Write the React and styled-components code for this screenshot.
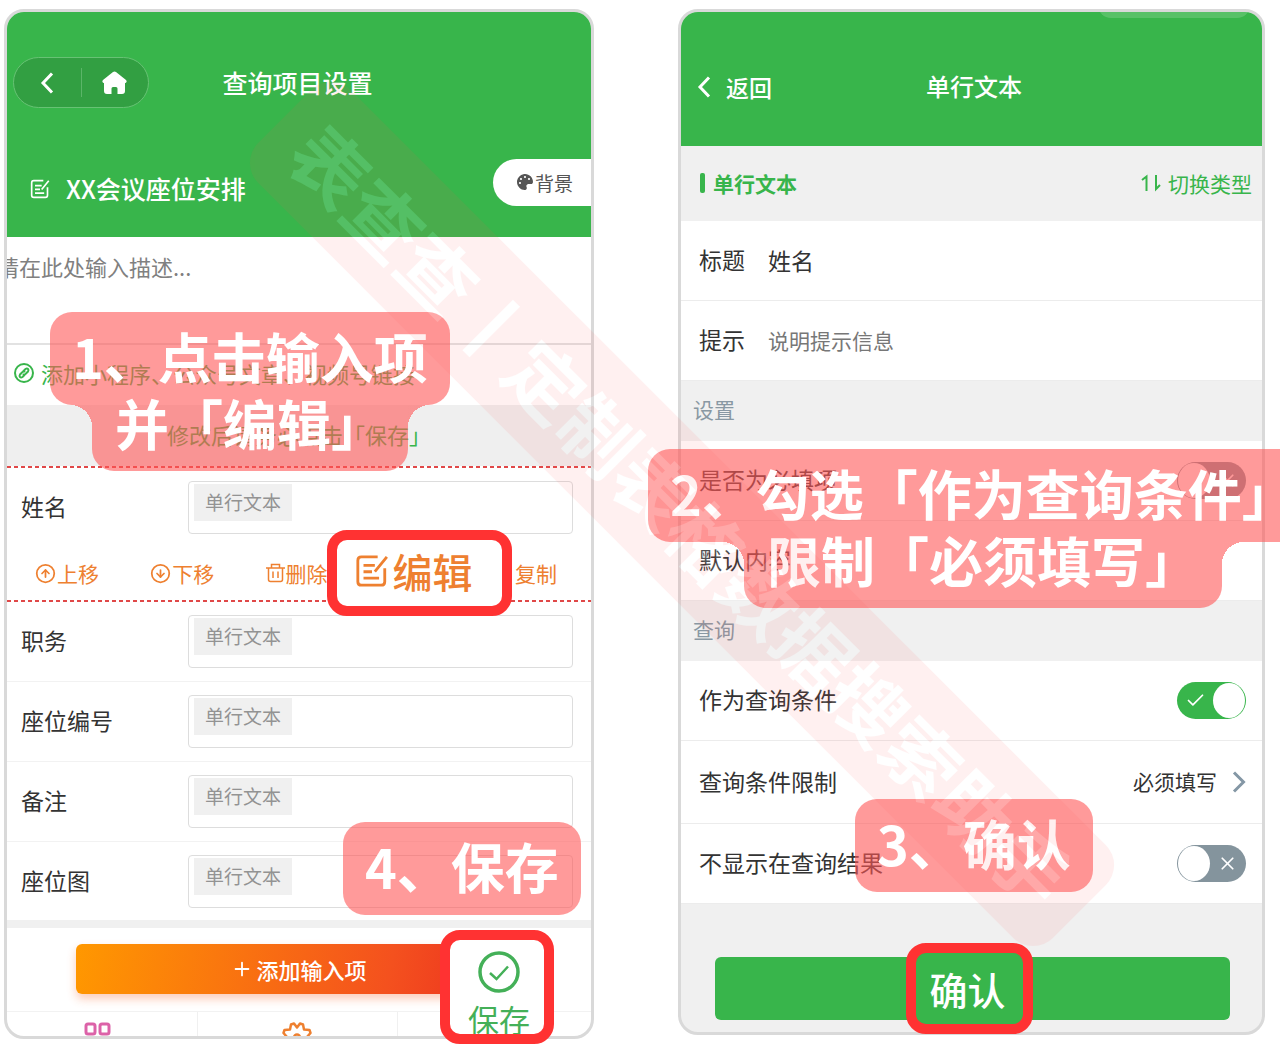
import { useState } from "react";
import { Check, X, CircleArrowUp, CircleArrowDown, Plus } from "lucide-react";
import { FaPalette } from "react-icons/fa";

//styles
import styled, { createGlobalStyle, css } from "styled-components";

const green = "#38b54b";
const orange = "#ee8030";
const coral = "rgba(255, 87, 87, 0.6)";
const red = "#ff3232";

const GlobalStyle = createGlobalStyle`
    * {
        box-sizing: border-box;
    }

    body {
        margin: 0;
        background-color: white;
        color: #333;
        font-family: "Noto Sans CJK SC", "Noto Sans", sans-serif;
    }

    button, input, textarea, select {
        font-family: inherit;
        border: none;
        background: none;
        padding: 0;
        margin: 0;
        outline: none;
    }

    svg {
        display: block;
        flex: none;
    }
`

const Board = styled.main`
    position: relative;
    display: grid;
    grid-template-columns: 590fr 587fr;
    align-items: start;
    gap: 84px;
    min-height: 100vh;
    padding: 9px 15px 3px 4px;
    overflow: hidden;
`

const Phone = styled.section`
    position: relative;
    min-width: 0;
`

const Screen = styled.div`
    position: relative;
    border: 3px solid #d9d9d9;
    border-radius: 20px;
    overflow: hidden;
    background-color: ${({ $gray }) => ($gray ? "#f0f0f0" : "white")};
`

//left phone
const ProjectHeader = styled.header`
    background-color: ${green};
    color: white;
    padding: 45px 0 31px 6px;
`

const NavBar = styled.div`
    display: grid;
    grid-template-columns: 136px 1fr 145px;
    align-items: center;
`

const Capsule = styled.div`
    display: flex;
    align-items: center;
    height: 51px;
    border: 1px solid #67c274;
    border-radius: 26px;
    background-color: #329f42;
`

const CapsuleButton = styled.button`
    flex: 1;
    display: flex;
    justify-content: center;
    align-items: center;
    height: 29px;
    color: white;

    & + & {
        border-left: 1px solid #5bb568;
    }
`

const NavTitle = styled.h1`
    margin: 0;
    padding-bottom: 2px;
    font-size: ${({ $large }) => ($large ? "25px" : "24px")};
    line-height: 36px;
    font-weight: 500;
    text-align: center;
`

const ProjectRow = styled.div`
    display: flex;
    align-items: flex-start;
    padding: 51px 0 0 17px;

    & > svg {
        margin-top: 20px;
    }
`

const ProjectName = styled.h2`
    flex: 1;
    margin: 11px 0 0 16px;
    font-size: 25px;
    line-height: 36px;
    font-weight: 500;
`

const BackgroundButton = styled.button`
    display: flex;
    align-items: center;
    gap: 2px;
    width: 98px;
    height: 47px;
    padding: 0 0 1px 24px;
    border-radius: 24px 0 0 24px;
    background-color: white;
    color: #555;
    font-size: 19px;
`

const Description = styled.textarea`
    display: block;
    width: 100%;
    height: 106px;
    padding: 13px 0;
    resize: none;
    text-indent: -10px;
    font-size: 22px;
    line-height: 33px;

    &::placeholder {
        color: #808080;
    }
`

const LinkRow = styled.a`
    display: flex;
    align-items: center;
    gap: 7px;
    height: 62px;
    padding: 0 0 5px 7px;
    border-top: 2px solid #e2e2e2;
    color: ${green};
    font-size: 22px;
    text-decoration: none;
    white-space: nowrap;
`

const SaveHint = styled.p`
    margin: 0;
    height: 61px;
    background-color: #efefef;
    color: ${green};
    font-size: 22px;
    line-height: 58px;
    text-align: center;
`

const dashes = "repeating-linear-gradient(90deg, #e04848 0 4px, transparent 4px 7px)";

const ActiveField = styled.div`
    padding: 2px 0;
    background: ${dashes} top / 100% 2px no-repeat, ${dashes} bottom / 100% 2px no-repeat;
`

const FieldRow = styled.div`
    display: grid;
    grid-template-columns: 167px 1fr;
    align-items: center;
    padding: 13px 18px 13px 14px;
    border-bottom: 1px solid #f2f2f2;

    &:last-child {
        padding-bottom: 12px;
        border-bottom: none;
    }
`

const FieldLabel = styled.label`
    padding-bottom: 4px;
    font-size: 23px;
    line-height: 34px;
`

const FieldBox = styled.div`
    height: 53px;
    padding: 2px 5px;
    border: 1px solid #ddd;
    border-radius: 4px;
`

const FieldInput = styled.input`
    display: block;
    width: 98px;
    height: 37px;
    padding-bottom: 2px;
    background-color: #f0f0f0;
    font-size: 19px;
    text-align: center;

    &::placeholder {
        color: #939393;
    }
`

const ActionRow = styled.div`
    display: flex;
    justify-content: space-between;
    height: 54px;
    padding: 0 34px 0 28px;
`

const ActionButton = styled.button`
    display: flex;
    align-items: center;
    gap: 1px;
    color: ${orange};
    font-size: 21px;
`

const ActionGap = styled.span`
    width: 64px;
`

const FooterBar = styled.div`
    padding: 16px 69px 17px;
    border-top: 8px solid #f0f0f0;
`

const AddButton = styled.button`
    display: flex;
    align-items: center;
    justify-content: center;
    gap: 3px;
    width: 100%;
    height: 50px;
    padding-bottom: 1px;
    border-radius: 6px;
    background: linear-gradient(100deg, #ff9800, #f4511e 70%, #ea2a20);
    box-shadow: 0 5px 10px rgba(244, 90, 30, 0.3);
    color: white;
    font-size: 22px;
    font-weight: 500;
`

const TabBar = styled.nav`
    display: grid;
    grid-template-columns: repeat(3, 1fr);
    height: 25px;
    margin: 0 -5px 0 -9px;
    border-top: 1px solid #f2f2f2;
    overflow: hidden;
`

const TabButton = styled.button`
    display: flex;
    justify-content: center;
    align-items: flex-start;
    margin-top: 9px;
`

const TabSlot = styled.div`
    display: flex;
    justify-content: center;

    & + & {
        border-left: 1px solid #f0f0f0;
    }
`

//right phone
const EditorHeader = styled.header`
    display: grid;
    grid-template-columns: 1fr auto 1fr;
    align-items: center;
    height: 134px;
    padding: 16px 11px 0 16px;
    background-color: ${green};
    color: white;
`

const Notch = styled.div`
    position: absolute;
    top: -20px;
    right: 12px;
    width: 152px;
    height: 26px;
    border-radius: 13px;
    background-color: rgba(255, 255, 255, 0.16);
`

const BackButton = styled.button`
    display: flex;
    align-items: center;
    gap: 15px;
    padding-bottom: 1px;
    color: white;
    font-size: 23px;
    font-weight: 500;
`

const TypeBar = styled.div`
    display: flex;
    justify-content: space-between;
    align-items: center;
    height: 75px;
    padding: 0 10px 2px 19px;
    color: ${green};
    font-size: 21px;
`

const TypeName = styled.strong`
    display: flex;
    align-items: center;
    gap: 8px;
    font-weight: 700;

    &::before {
        content: "";
        width: 5px;
        height: 20px;
        border-radius: 2px;
        background-color: ${green};
    }
`

const SwitchType = styled.button`
    display: flex;
    align-items: center;
    gap: 7px;
    color: ${green};
    font-size: 21px;
`

const SettingRow = styled.div`
    display: flex;
    align-items: center;
    min-height: ${({ $tall }) => ($tall ? "83px" : "80px")};
    padding: 0 16px 0 18px;
    background-color: white;
    border-bottom: 1px solid #ececec;
`

const SettingLabel = styled.label`
    margin-right: 23px;
    padding-bottom: 3px;
    font-size: 23px;
    line-height: 34px;
`

const SettingInput = styled.input`
    flex: 1;
    min-width: 0;
    padding-bottom: 2px;
    color: #333;
    font-size: ${({ $value }) => ($value ? "23px" : "21px")};

    &::placeholder {
        color: #777;
    }
`

const SectionTitle = styled.h2`
    margin: 0;
    padding: 0 0 4px 12px;
    font-size: 21px;
    line-height: 56px;
    font-weight: 400;
    color: #8998a3;
`

const LimitSelect = styled.select`
    flex: 1;
    appearance: none;
    padding-bottom: 2px;
    color: #333;
    font-size: 21px;
    text-align-last: right;
    margin-right: 15px;
`

const Toggle = styled.span`
    position: relative;
    display: flex;
    align-items: center;
    justify-content: space-between;
    flex-direction: ${({ $on }) => ($on ? "row-reverse" : "row")};
    width: 69px;
    height: 37px;
    margin-left: auto;
    padding: 1px;
    border-radius: 19px;
    background-color: ${({ $on }) => ($on ? green : "#84949d")};
    color: white;

    input {
        position: absolute;
        inset: 0;
        opacity: 0;
        width: 100%;
        height: 100%;
        cursor: pointer;
    }

    svg {
        margin: 0 7px;
    }
`

const Knob = styled.span`
    width: 35px;
    height: 35px;
    border-radius: 50%;
    background-color: white;
`

const ConfirmBar = styled.div`
    padding: 53px 32px 12px 34px;
`

const ConfirmButton = styled.button`
    display: block;
    width: 100%;
    height: 63px;
    border-radius: 6px;
    background-color: ${green};
`

//tutorial marks laid over the phones
const Highlight = styled.button`
    position: absolute;
    display: flex;
    align-items: center;
    justify-content: center;
    border: 10px solid ${red};
    border-radius: 20px;
    overflow: hidden;
    background-color: white;
    line-height: 1;
`

const EditHighlight = styled(Highlight)`
    top: 521px;
    left: 323px;
    width: 185px;
    height: 86px;
    padding: 0 12px 5px 0;
    gap: 4px;
    color: ${orange};
    font-size: 40px;
    font-weight: 500;
`

const SaveHighlight = styled(Highlight)`
    top: 921px;
    left: 436px;
    width: 114px;
    height: 114px;
    padding: 11px 0 0 4px;
    flex-direction: column;
    justify-content: flex-start;
    gap: 10px;
    color: #44b058;
    font-size: 31px;
`

const ConfirmHighlight = styled(Highlight)`
    top: 934px;
    left: 228px;
    width: 127px;
    height: 91px;
    padding-right: 4px;
    background-color: ${green};
    color: white;
    font-size: 38px;
    font-weight: 500;
`

const Callout = styled.div`
    position: absolute;
    top: ${({ $top }) => $top}px;
    left: ${({ $left }) => $left}px;
    display: flex;
    flex-direction: column;
    align-items: center;
    color: white;
    font-size: 54px;
    font-weight: 700;
    white-space: nowrap;
`

const CalloutLine = styled.div`
    padding: 10px 22px 16px;
    border-radius: 22px;
    background-color: ${coral};
    line-height: 67px;
`

const notch = css`
    content: "";
    position: absolute;
    top: 0;
    width: 22px;
    height: 22px;
`

const CalloutTail = styled.div`
    position: relative;
    padding: 0 23px 30px;
    border-radius: 0 0 22px 22px;
    background-color: ${coral};
    line-height: 36px;

    &::before {
        ${notch}
        right: 100%;
        background: radial-gradient(circle at 0 100%, transparent 22px, ${coral} 22px);
    }

    &::after {
        ${notch}
        left: 100%;
        background: radial-gradient(circle at 100% 100%, transparent 22px, ${coral} 22px);
    }
`

const Watermark = styled.div`
    position: absolute;
    top: 514px;
    left: 682px;
    transform: translate(-50%, -50%) rotate(45deg);
    padding: 0 30px;
    border-radius: 28px;
    background-color: ${coral};
    color: white;
    font-size: 76px;
    line-height: 131px;
    font-weight: 700;
    white-space: nowrap;
    opacity: 0.14;
    pointer-events: none;
`

const ChevronIcon = ({ width, height, right, color = "currentColor" }) => (
    <svg width={width} height={height} viewBox="0 0 14 22" fill="none" stroke={color} strokeWidth="3">
        <path d={right ? "M2 1.500 11.500 11 2 20.500" : "M12 1.500 3 11 12 20.500"} />
    </svg>
)

const HomeIcon = () => (
    <svg width="25" height="23" viewBox="0 0 25 23" fill="currentColor">
        <path d="M11 1Q12.500 0 14 1L24 9Q25.500 11 23.500 12H23V20Q23 23 20 23H15.500V17.500Q15.500 16 14 16H11Q9.500 16 9.500 17.500V23H5Q2 23 2 20V12H1.500Q-.5 11 1 9Z" />
    </svg>
)

const NoteIcon = ({ size, stroke = 2 }) => (
    <svg width={size} height={size} viewBox="0 0 24 24" fill="none" stroke="currentColor" strokeWidth={stroke}>
        <path d="M16 2H4.500Q2 2 2 4.500V19.500Q2 22 4.500 22H18.500Q21 22 21 19.500V10" />
        <path d="M6 8h8M6 12.500h6M6 17h11M22.500 2 14 12.500" />
    </svg>
)

const LinkIcon = () => (
    <svg width="20" height="20" viewBox="0 0 20 20" fill="none" stroke="currentColor" strokeWidth="2">
        <circle cx="10" cy="10" r="9" />
        <path d="M9 8.500 11.500 6Q13 5 14 6T14 8.500L11.500 11Q10 12 9 11M11 11.500 8.500 14Q7 15 6 14T6 11.500L8.500 9Q10 8 11 9" />
    </svg>
)

const TrashIcon = () => (
    <svg width="19" height="20" viewBox="0 0 19 20" fill="none" stroke="currentColor" strokeWidth="1.500">
        <path d="M0 5h19M5.500 5V1.500h8V5M2.500 5v11.500q0 2 2 2h10q2 0 2-2V5M7 8.500v6.500M12 8.500v6.500" />
    </svg>
)

const CopyIcon = () => (
    <svg width="20" height="20" viewBox="0 0 20 20" fill="none" stroke="currentColor" strokeWidth="2">
        <path d="M5 6h10v13H5zM11 6V1H1v13h4" />
    </svg>
)

const SwapIcon = () => (
    <svg width="20" height="18" viewBox="0 0 20 18" fill="none" stroke="currentColor" strokeWidth="2">
        <path d="M1 6 5.500 2.500V17M15 1v14L19 11" />
    </svg>
)

const SavedIcon = () => (
    <svg width="42" height="42" viewBox="0 0 42 42" fill="none" stroke="currentColor" strokeWidth="3.500">
        <circle cx="21" cy="21" r="19" />
        <path d="M12 22 18.500 28 30 15.500" strokeWidth="2.500" />
    </svg>
)

const GridIcon = () => (
    <svg width="27" height="27" viewBox="0 0 27 27" fill="none" stroke="#dc62a8" strokeWidth="3">
        <rect x="2" y="3" width="9" height="10" rx="2" />
        <rect x="16" y="3" width="9" height="10" rx="2" />
        <rect x="2" y="20" width="9" height="10" rx="2" />
        <rect x="16" y="20" width="9" height="10" rx="2" />
    </svg>
)

const GearIcon = () => (
    <svg width="30" height="30" viewBox="0 0 30 30" fill="none" stroke={orange} strokeWidth="2.500" strokeLinejoin="round">
        <path d="M15 6.500 18 2.500 21 3.500 22 8.500 27.500 9 28.500 12 25 16 28.500 20 27.500 23 22 23.500 21 28.500 18 29.500 15 25.500 12 29.500 9 28.500 8 23.500 2.500 23 1.500 20 5 16 1.500 12 2.500 9 8 8.500 9 3.500 12 2.500Z" />
        <circle cx="15" cy="16.500" r="3" />
    </svg>
)

const fields = ["职务", "座位编号", "备注", "座位图"];

const Field = ({ name }) => (
    <FieldRow>
        <FieldLabel htmlFor={name}>{name}</FieldLabel>
        <FieldBox>
            <FieldInput id={name} placeholder="单行文本" />
        </FieldBox>
    </FieldRow>
)

const ToggleRow = ({ id, label, initial }) => {
    const [on, setOn] = useState(initial);

    return (
        <SettingRow>
            <SettingLabel htmlFor={id}>{label}</SettingLabel>
            <Toggle $on={on}>
                <Knob />
                {on ? <Check size={21} strokeWidth={2} /> : <X size={21} strokeWidth={2} />}
                <input id={id} type="checkbox" checked={on} onChange={() => setOn(!on)} />
            </Toggle>
        </SettingRow>
    )
}

const ProjectPhone = () => (
    <Phone>
        <Screen>
            <ProjectHeader>
                <NavBar>
                    <Capsule>
                        <CapsuleButton aria-label="返回">
                            <ChevronIcon width={14} height={22} />
                        </CapsuleButton>
                        <CapsuleButton aria-label="首页">
                            <HomeIcon />
                        </CapsuleButton>
                    </Capsule>
                    <NavTitle $large>查询项目设置</NavTitle>
                </NavBar>
                <ProjectRow>
                    <NoteIcon size={20} />
                    <ProjectName>XX会议座位安排</ProjectName>
                    <BackgroundButton>
                        <FaPalette size={16} />
                        背景
                    </BackgroundButton>
                </ProjectRow>
            </ProjectHeader>

            <Description aria-label="描述" placeholder="请在此处输入描述..." />
            <LinkRow href="#link">
                <LinkIcon />
                添加小程序、公众号文章、视频号链接
            </LinkRow>
            <SaveHint>修改后请务必点击「保存」</SaveHint>

            <ActiveField>
                <div>
                    <Field name="姓名" />
                </div>
                <ActionRow>
                    <ActionButton><CircleArrowUp size={21} />上移</ActionButton>
                    <ActionButton><CircleArrowDown size={21} />下移</ActionButton>
                    <ActionButton><TrashIcon />删除</ActionButton>
                    <ActionGap />
                    <ActionButton><CopyIcon />复制</ActionButton>
                </ActionRow>
            </ActiveField>
            <div>
                {fields.map((name) => <Field key={name} name={name} />)}
            </div>

            <FooterBar>
                <AddButton><Plus size={22} />添加输入项</AddButton>
            </FooterBar>
            <TabBar>
                <TabSlot>
                    <TabButton aria-label="模板"><GridIcon /></TabButton>
                </TabSlot>
                <TabSlot>
                    <TabButton aria-label="设置"><GearIcon /></TabButton>
                </TabSlot>
                <TabSlot />
            </TabBar>
        </Screen>

        <Callout $top={303} $left={46}>
            <CalloutLine>1、点击输入项</CalloutLine>
            <CalloutTail>并「编辑」</CalloutTail>
        </Callout>
        <EditHighlight><NoteIcon size={34} />编辑</EditHighlight>
        <Callout $top={813} $left={339}>
            <CalloutLine>4、保存</CalloutLine>
        </Callout>
        <SaveHighlight><SavedIcon />保存</SaveHighlight>
    </Phone>
)

const EditorPhone = () => {
    const [title, setTitle] = useState("姓名");

    return (
        <Phone>
            <Screen $gray>
                <EditorHeader>
                    <BackButton><ChevronIcon width={14} height={22} />返回</BackButton>
                    <NavTitle>单行文本</NavTitle>
                </EditorHeader>
                <Notch />
                <TypeBar>
                    <TypeName>单行文本</TypeName>
                    <SwitchType><SwapIcon />切换类型</SwitchType>
                </TypeBar>
                <SettingRow>
                    <SettingLabel htmlFor="title">标题</SettingLabel>
                    <SettingInput id="title" $value value={title} onChange={(e) => setTitle(e.target.value)} />
                </SettingRow>
                <SettingRow>
                    <SettingLabel htmlFor="hint">提示</SettingLabel>
                    <SettingInput id="hint" placeholder="说明提示信息" />
                </SettingRow>

                <SectionTitle>设置</SectionTitle>
                <ToggleRow id="required" label="是否为必填项" initial={false} />
                <SettingRow>
                    <SettingLabel htmlFor="default">默认内容</SettingLabel>
                    <SettingInput id="default" />
                </SettingRow>

                <SectionTitle>查询</SectionTitle>
                <ToggleRow id="condition" label="作为查询条件" initial={true} />
                <SettingRow $tall>
                    <SettingLabel htmlFor="limit">查询条件限制</SettingLabel>
                    <LimitSelect id="limit">
                        <option>必须填写</option>
                    </LimitSelect>
                    <ChevronIcon width={14} height={22} right color="#8497a5" />
                </SettingRow>
                <ToggleRow id="hidden" label="不显示在查询结果" initial={false} />

                <ConfirmBar>
                    <ConfirmButton aria-label="确认" />
                </ConfirmBar>
            </Screen>

            <Callout $top={440} $left={-30}>
                <CalloutLine>2、勾选「作为查询条件」</CalloutLine>
                <CalloutTail>限制「必须填写」</CalloutTail>
            </Callout>
            <Callout $top={790} $left={177}>
                <CalloutLine>3、确认</CalloutLine>
            </Callout>
            <ConfirmHighlight>确认</ConfirmHighlight>
        </Phone>
    )
}

export default function App() {
    return (
        <>
            <GlobalStyle />
            <Board>
                <ProjectPhone />
                <EditorPhone />
                <Watermark aria-hidden="true">表查查丨定制表格数据搜索助手</Watermark>
            </Board>
        </>
    )
}
